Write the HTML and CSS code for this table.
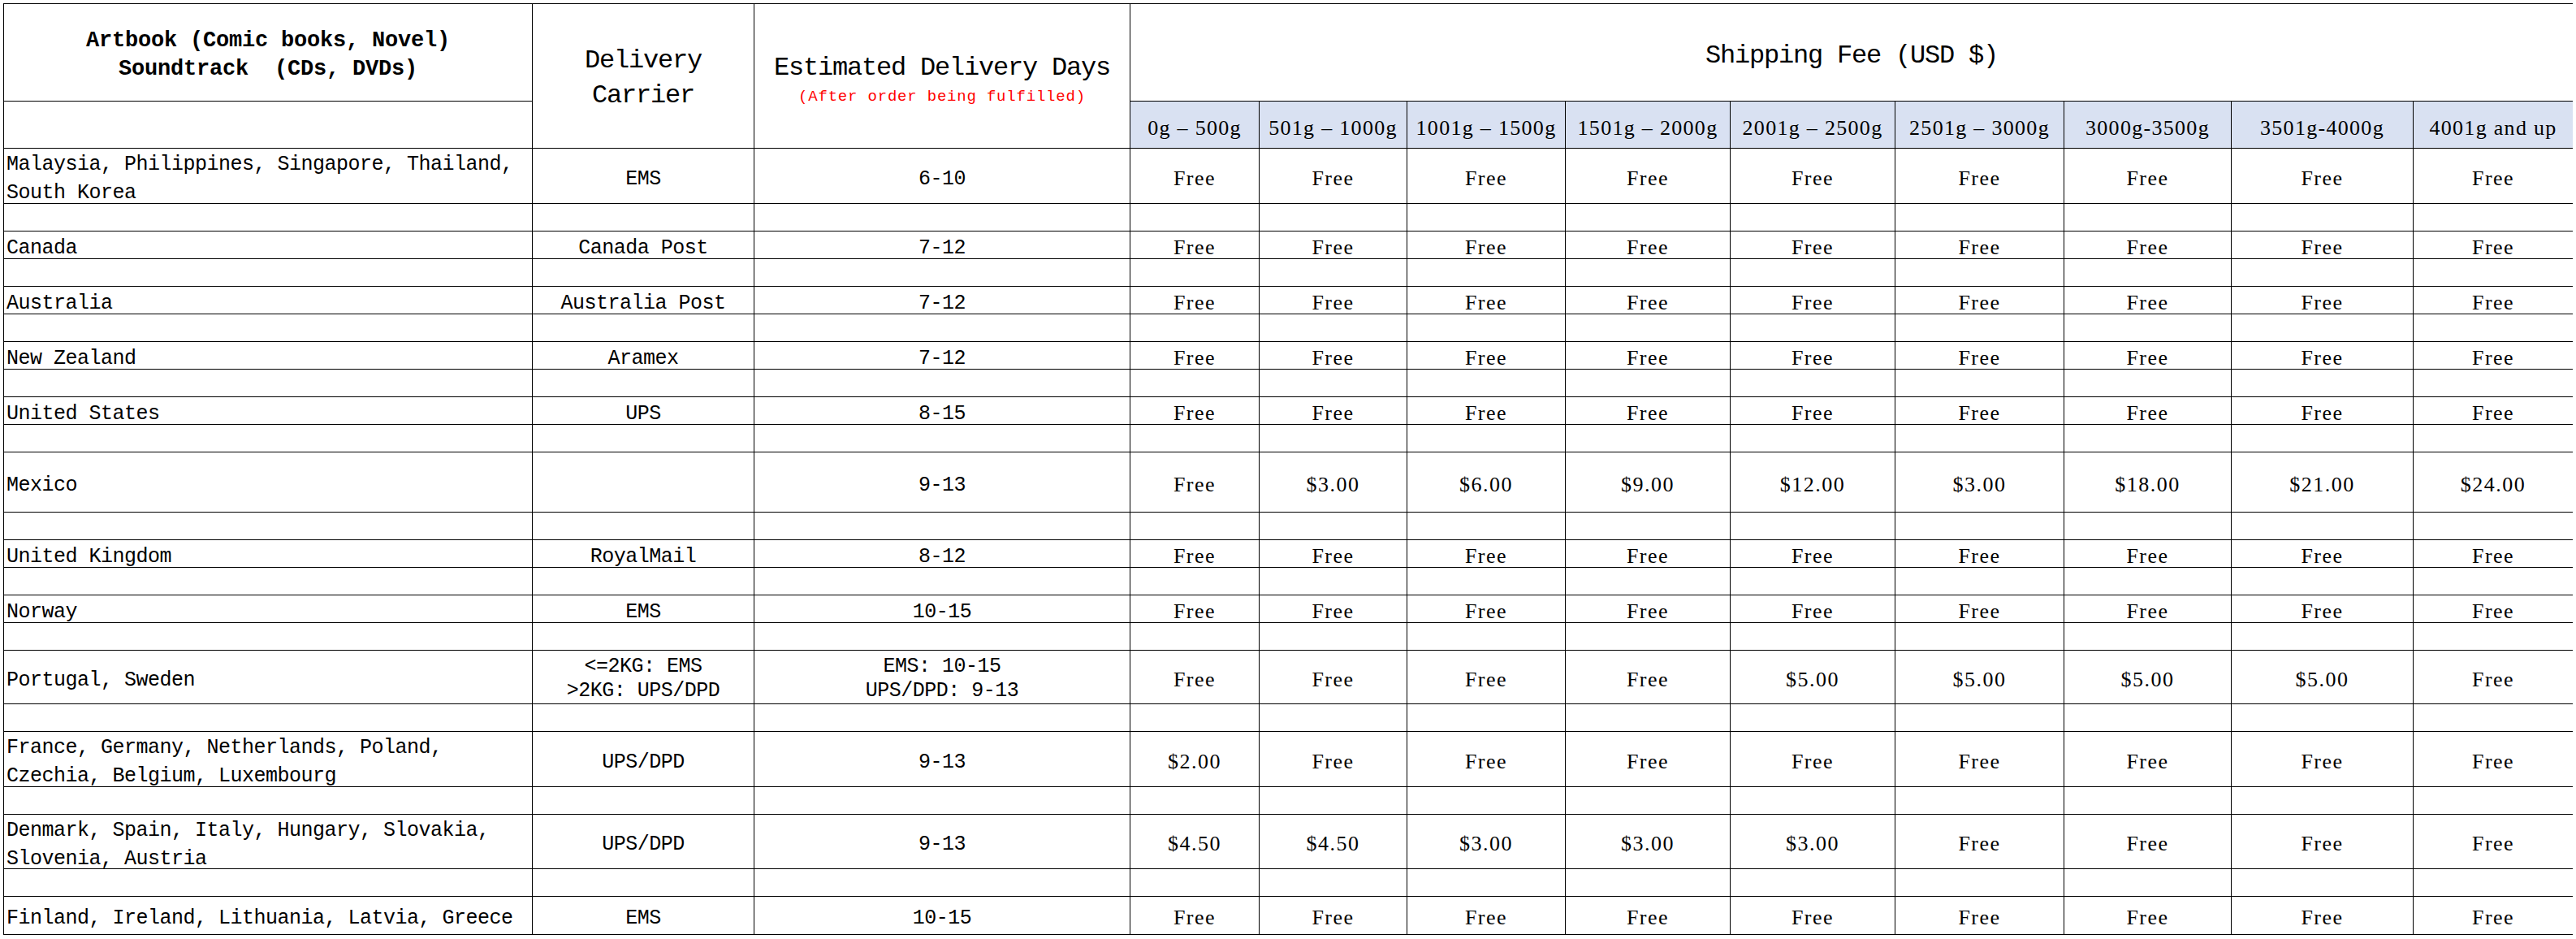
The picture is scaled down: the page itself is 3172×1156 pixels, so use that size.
FILE: index.html
```html
<!DOCTYPE html>
<html lang="en">
<head>
<meta charset="utf-8">
<title>Shipping Fee</title>
<link rel="stylesheet" href="styles.css">
</head>
<body>
<table class="ship">
  <colgroup>
    <col class="c-region"><col class="c-carrier"><col class="c-days">
    <col class="c-w1"><col class="c-w2"><col class="c-w3"><col class="c-w4"><col class="c-w5">
    <col class="c-w6"><col class="c-w7"><col class="c-w8"><col class="c-w9">
  </colgroup>
  <thead>
    <tr class="hr1">
      <th class="h-art">Artbook (Comic books, Novel)<br>Soundtrack&nbsp; (CDs, DVDs)</th>
      <th class="h-carrier" rowspan="2">Delivery<br>Carrier</th>
      <th class="h-days" rowspan="2"><div class="days-main">Estimated Delivery Days</div><div class="note">(After order being fulfilled)</div></th>
      <th class="h-fee" colspan="9">Shipping Fee (USD $)</th>
    </tr>
    <tr class="hr2">
      <th class="h-blank"></th>
      <th class="w">0g – 500g</th>
      <th class="w">501g – 1000g</th>
      <th class="w">1001g – 1500g</th>
      <th class="w">1501g – 2000g</th>
      <th class="w">2001g – 2500g</th>
      <th class="w">2501g – 3000g</th>
      <th class="w">3000g-3500g</th>
      <th class="w">3501g-4000g</th>
      <th class="w">4001g and up</th>
    </tr>
  </thead>
  <tbody>
    <tr class="r68">
      <td class="region cwrap"><div class="wrap">Malaysia, Philippines, Singapore, Thailand,<br>South Korea</div></td>
      <td>EMS</td><td>6-10</td>
      <td class="fee">Free</td><td class="fee">Free</td><td class="fee">Free</td><td class="fee">Free</td><td class="fee">Free</td><td class="fee">Free</td><td class="fee">Free</td><td class="fee">Free</td><td class="fee">Free</td>
    </tr>
    <tr class="r34"><td></td><td></td><td></td><td></td><td></td><td></td><td></td><td></td><td></td><td></td><td></td><td></td></tr>
    <tr class="r34">
      <td class="region">Canada</td><td>Canada Post</td><td>7-12</td>
      <td class="fee">Free</td><td class="fee">Free</td><td class="fee">Free</td><td class="fee">Free</td><td class="fee">Free</td><td class="fee">Free</td><td class="fee">Free</td><td class="fee">Free</td><td class="fee">Free</td>
    </tr>
    <tr class="r34"><td></td><td></td><td></td><td></td><td></td><td></td><td></td><td></td><td></td><td></td><td></td><td></td></tr>
    <tr class="r34">
      <td class="region">Australia</td><td>Australia Post</td><td>7-12</td>
      <td class="fee">Free</td><td class="fee">Free</td><td class="fee">Free</td><td class="fee">Free</td><td class="fee">Free</td><td class="fee">Free</td><td class="fee">Free</td><td class="fee">Free</td><td class="fee">Free</td>
    </tr>
    <tr class="r34"><td></td><td></td><td></td><td></td><td></td><td></td><td></td><td></td><td></td><td></td><td></td><td></td></tr>
    <tr class="r34">
      <td class="region">New Zealand</td><td>Aramex</td><td>7-12</td>
      <td class="fee">Free</td><td class="fee">Free</td><td class="fee">Free</td><td class="fee">Free</td><td class="fee">Free</td><td class="fee">Free</td><td class="fee">Free</td><td class="fee">Free</td><td class="fee">Free</td>
    </tr>
    <tr class="r34"><td></td><td></td><td></td><td></td><td></td><td></td><td></td><td></td><td></td><td></td><td></td><td></td></tr>
    <tr class="r34">
      <td class="region">United States</td><td>UPS</td><td>8-15</td>
      <td class="fee">Free</td><td class="fee">Free</td><td class="fee">Free</td><td class="fee">Free</td><td class="fee">Free</td><td class="fee">Free</td><td class="fee">Free</td><td class="fee">Free</td><td class="fee">Free</td>
    </tr>
    <tr class="r34"><td></td><td></td><td></td><td></td><td></td><td></td><td></td><td></td><td></td><td></td><td></td><td></td></tr>
    <tr class="r74">
      <td class="region">Mexico</td><td></td><td>9-13</td>
      <td class="fee">Free</td><td class="fee">$3.00</td><td class="fee">$6.00</td><td class="fee">$9.00</td><td class="fee">$12.00</td><td class="fee">$3.00</td><td class="fee">$18.00</td><td class="fee">$21.00</td><td class="fee">$24.00</td>
    </tr>
    <tr class="r34"><td></td><td></td><td></td><td></td><td></td><td></td><td></td><td></td><td></td><td></td><td></td><td></td></tr>
    <tr class="r34">
      <td class="region">United Kingdom</td><td>RoyalMail</td><td>8-12</td>
      <td class="fee">Free</td><td class="fee">Free</td><td class="fee">Free</td><td class="fee">Free</td><td class="fee">Free</td><td class="fee">Free</td><td class="fee">Free</td><td class="fee">Free</td><td class="fee">Free</td>
    </tr>
    <tr class="r34"><td></td><td></td><td></td><td></td><td></td><td></td><td></td><td></td><td></td><td></td><td></td><td></td></tr>
    <tr class="r34">
      <td class="region">Norway</td><td>EMS</td><td>10-15</td>
      <td class="fee">Free</td><td class="fee">Free</td><td class="fee">Free</td><td class="fee">Free</td><td class="fee">Free</td><td class="fee">Free</td><td class="fee">Free</td><td class="fee">Free</td><td class="fee">Free</td>
    </tr>
    <tr class="r34"><td></td><td></td><td></td><td></td><td></td><td></td><td></td><td></td><td></td><td></td><td></td><td></td></tr>
    <tr class="r66">
      <td class="region">Portugal, Sweden</td>
      <td class="two">&lt;=2KG: EMS<br>&gt;2KG: UPS/DPD</td>
      <td class="two">EMS: 10-15<br>UPS/DPD: 9-13</td>
      <td class="fee">Free</td><td class="fee">Free</td><td class="fee">Free</td><td class="fee">Free</td><td class="fee">$5.00</td><td class="fee">$5.00</td><td class="fee">$5.00</td><td class="fee">$5.00</td><td class="fee">Free</td>
    </tr>
    <tr class="r34"><td></td><td></td><td></td><td></td><td></td><td></td><td></td><td></td><td></td><td></td><td></td><td></td></tr>
    <tr class="r68">
      <td class="region cwrap"><div class="wrap">France, Germany, Netherlands, Poland,<br>Czechia, Belgium, Luxembourg</div></td>
      <td>UPS/DPD</td><td>9-13</td>
      <td class="fee">$2.00</td><td class="fee">Free</td><td class="fee">Free</td><td class="fee">Free</td><td class="fee">Free</td><td class="fee">Free</td><td class="fee">Free</td><td class="fee">Free</td><td class="fee">Free</td>
    </tr>
    <tr class="r34"><td></td><td></td><td></td><td></td><td></td><td></td><td></td><td></td><td></td><td></td><td></td><td></td></tr>
    <tr class="r67">
      <td class="region cwrap"><div class="wrap">Denmark, Spain, Italy, Hungary, Slovakia,<br>Slovenia, Austria</div></td>
      <td>UPS/DPD</td><td>9-13</td>
      <td class="fee">$4.50</td><td class="fee">$4.50</td><td class="fee">$3.00</td><td class="fee">$3.00</td><td class="fee">$3.00</td><td class="fee">Free</td><td class="fee">Free</td><td class="fee">Free</td><td class="fee">Free</td>
    </tr>
    <tr class="r34"><td></td><td></td><td></td><td></td><td></td><td></td><td></td><td></td><td></td><td></td><td></td><td></td></tr>
    <tr class="r47">
      <td class="region">Finland, Ireland, Lithuania, Latvia, Greece</td><td>EMS</td><td>10-15</td>
      <td class="fee">Free</td><td class="fee">Free</td><td class="fee">Free</td><td class="fee">Free</td><td class="fee">Free</td><td class="fee">Free</td><td class="fee">Free</td><td class="fee">Free</td><td class="fee">Free</td>
    </tr>
  </tbody>
</table>
</body>
</html>
```
FILE: styles.css
```css
html, body {
  background: #fff;
}
body {
  margin: 4px;
}

.ship {
  border-collapse: collapse;
  table-layout: fixed;
  width: 3165px;
  font-family: "Liberation Mono", "DejaVu Sans Mono", monospace;
  color: #000;
}

.ship th,
.ship td {
  border: 1px solid #000;
  padding: 0;
  font-weight: normal;
  white-space: nowrap;
  text-align: center;
}

/* column widths (line to line) */
.c-region { width: 651px; }
.c-carrier { width: 273px; }
.c-days { width: 463px; }
.c-w1 { width: 159px; }
.c-w2 { width: 182px; }
.c-w3 { width: 195px; }
.c-w4 { width: 203px; }
.c-w5 { width: 203px; }
.c-w6 { width: 208px; }
.c-w7 { width: 206px; }
.c-w8 { width: 224px; }
.c-w9 { width: 197px; }

/* header */
.hr1 { height: 120px; }
.hr2 { height: 58px; }

.ship th {
  vertical-align: top;
}

.ship th.h-art {
  font-size: 27px;
  font-weight: bold;
  letter-spacing: -0.2px;
  line-height: 35px;
  padding-top: 28px;
}

.ship th.h-carrier {
  font-size: 32px;
  letter-spacing: -1.2px;
  line-height: 43px;
  padding-top: 48px;
}

.ship th.h-days {
  padding-top: 59px;
}
.days-main {
  font-size: 32px;
  letter-spacing: -1.2px;
  line-height: 40px;
}
.note {
  color: #ff0000;
  font-size: 19px;
  letter-spacing: 0.8px;
  line-height: 31px;
}

.ship th.h-fee {
  font-size: 32px;
  letter-spacing: -1.2px;
  line-height: 40px;
  padding-top: 44px;
}

.ship th.w {
  background: #d9e1f2;
  font-family: "Liberation Serif", "Times New Roman", serif;
  font-size: 26px;
  letter-spacing: 1.3px;
  line-height: 26px;
  padding-top: 20px;
}

/* body rows */
.r34 { height: 34px; }
.r47 { height: 47px; }
.r66 { height: 66px; }
.r67 { height: 67px; }
.r68 { height: 68px; }
.r74 { height: 74px; }

.ship td {
  font-size: 25px;
  letter-spacing: -0.5px;
  line-height: 25px;
  padding-top: 7px;
  vertical-align: middle;
}

.ship td.region {
  text-align: left;
  padding-left: 3px;
}

.ship td.cwrap {
  vertical-align: top;
  padding-top: 0;
}
.wrap {
  line-height: 35px;
  margin-top: 2px;
  margin-bottom: -6px;
}

.ship td.two {
  line-height: 30px;
  padding-top: 4px;
}

.ship td.fee {
  font-family: "Liberation Serif", "Times New Roman", serif;
  font-size: 26px;
  letter-spacing: 1.5px;
  line-height: 26px;
  padding-top: 6px;
}
```
